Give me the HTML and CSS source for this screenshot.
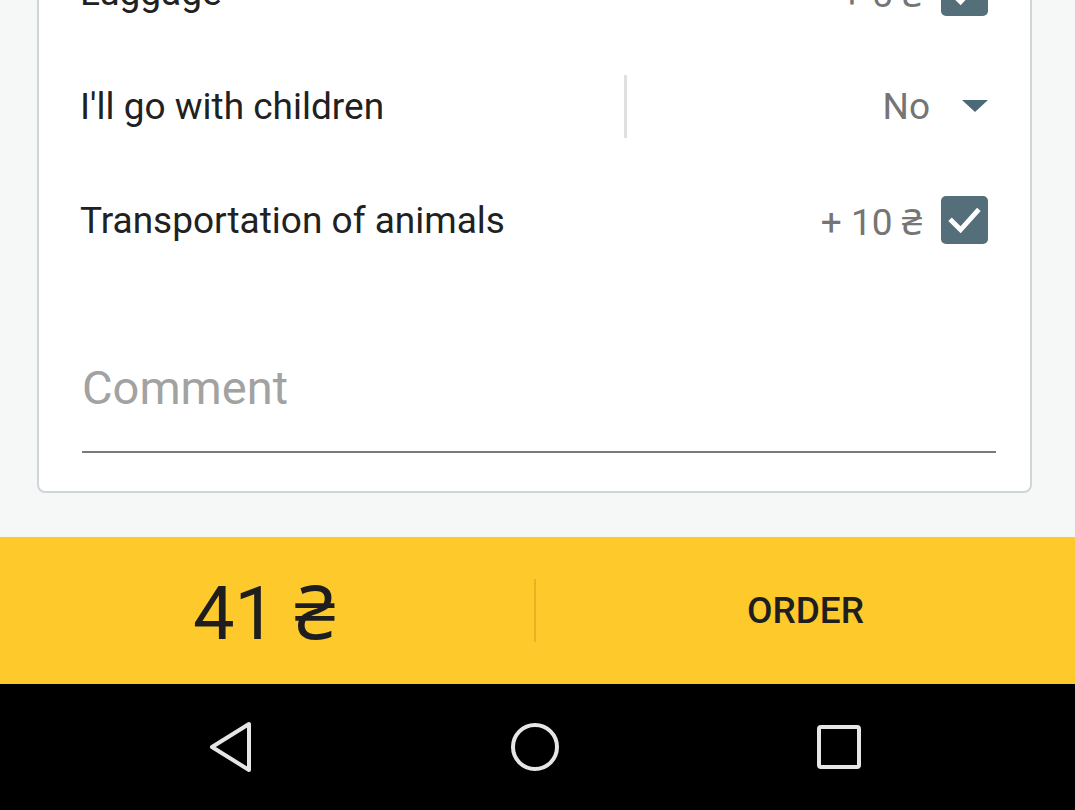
FILE: index.html
```html
<!DOCTYPE html>
<html>
<head>
<meta charset="utf-8">
<link rel="stylesheet" href="styles.css">
</head>
<body>
<div class="screen">
  <div class="content">
    <div class="card">
      <div class="row">
        <span class="label">Luggage</span>
        <span class="price">+ 5 ₴</span>
        <span class="checkbox"><svg viewBox="0 0 48 48" width="48" height="48"><path d="M11 25 L20 34 L37 15" fill="none" stroke="#fff" stroke-width="5" stroke-linecap="square"/></svg></span>
      </div>
      <div class="row">
        <span class="label">I'll go with children</span>
        <div class="select">
          <span class="select-value">No</span>
          <svg class="caret" viewBox="0 0 26 12" width="26" height="12"><polygon points="0,0 26,0 13,12" fill="#4b6976"/></svg>
        </div>
      </div>
      <div class="row">
        <span class="label">Transportation of animals</span>
        <span class="price">+ 10 ₴</span>
        <span class="checkbox"><svg viewBox="0 0 48 48" width="48" height="48"><path d="M11 25 L20 34 L37 15" fill="none" stroke="#fff" stroke-width="5" stroke-linecap="square"/></svg></span>
      </div>
      <div class="comment">
        <span class="placeholder">Comment</span>
      </div>
    </div>
  </div>
  <div class="orderbar">
    <div class="total">41 ₴</div>
    <div class="order">ORDER</div>
  </div>
  <div class="navbar">
    <svg class="nav-icon" width="48" height="52" viewBox="0 0 48 52"><polygon points="43,3 43,49 6,26" fill="none" stroke="#e6e6e6" stroke-width="4" stroke-linejoin="round"/></svg>
    <svg class="nav-icon" width="52" height="52" viewBox="0 0 52 52"><circle cx="26" cy="26" r="22" fill="none" stroke="#e6e6e6" stroke-width="4"/></svg>
    <svg class="nav-icon" width="48" height="48" viewBox="0 0 48 48"><rect x="4" y="4" width="40" height="40" rx="2" fill="none" stroke="#e6e6e6" stroke-width="4"/></svg>
  </div>
</div>
</body>
</html>
```
FILE: styles.css
```css
* { box-sizing: border-box; }
html, body { margin: 0; padding: 0; }
body {
  font-family: Roboto, "Noto Sans", "DejaVu Sans", sans-serif;
  color: #212121;
  background: #f6f7f7;
}
.screen {
  width: 1075px;
  height: 810px;
  display: flex;
  flex-direction: column;
  overflow: hidden;
}
.content {
  flex: 0 0 537px;
  overflow: hidden;
  background: #f6f7f7;
}
.card {
  margin-top: -140px;
  margin-left: 37px;
  width: 995px;
  background: #fff;
  border: 2px solid #cfd6da;
  border-radius: 8px;
  padding: 73px 42px 38px 41px;
}
.row {
  height: 114px;
  display: flex;
  align-items: center;
}
.label {
  flex: 1;
  font-size: 37px;
  color: #212121;
}
.price {
  font-size: 37px;
  color: #757575;
  margin-right: 19px;
}
.checkbox {
  width: 47px;
  height: 48px;
  border-radius: 5px;
  background: #546e7a;
  display: flex;
  align-items: center;
  justify-content: center;
}
.select {
  width: 364px;
  height: 63px;
  border-left: 3px solid #e0e0e0;
  display: flex;
  align-items: center;
  justify-content: flex-end;
}
.select-value {
  font-size: 37px;
  color: #757575;
  margin-right: 32px;
}
.caret { display: block; }
.comment {
  margin: 83px -8px 0 2px;
  padding-bottom: 35px;
  border-bottom: 2px solid #7a7a7a;
}
.placeholder {
  display: block;
  font-size: 47px;
  line-height: 56px;
  color: #a2a2a2;
}
.orderbar {
  flex: 0 0 147px;
  background: #fdc92b;
  display: flex;
  align-items: center;
}
.total {
  flex: 0 0 534px;
  text-align: center;
  font-size: 74px;
  color: #1e1e1e;
  padding-right: 6px;
}
.order {
  flex: 1;
  height: 63px;
  border-left: 2px solid #e3b524;
  display: flex;
  align-items: center;
  justify-content: center;
  font-size: 37px;
  font-weight: 500;
  color: #1e1e1e;
}
.navbar {
  flex: 1;
  background: #000;
  display: flex;
  align-items: center;
  justify-content: space-between;
  padding: 0 212px 0 206px;
}
.nav-icon { display: block; }
```
